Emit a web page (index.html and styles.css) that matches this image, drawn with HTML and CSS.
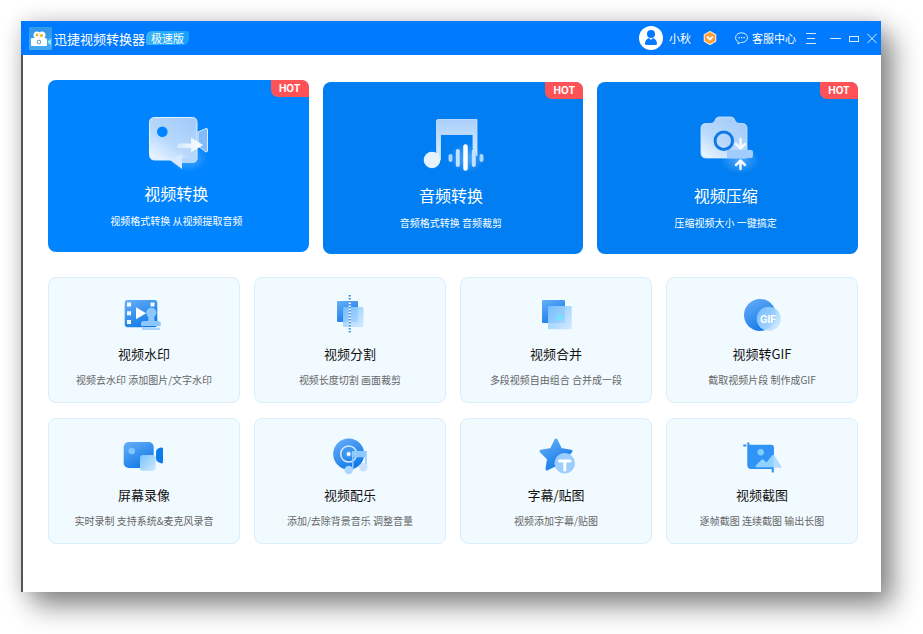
FILE: index.html
```html
<!DOCTYPE html>
<html lang="zh-CN">
<head>
  <meta charset="UTF-8" />
  <title>迅捷视频转换器</title>
  <link rel="stylesheet" href="styles.css">
</head>
<body>
  <svg class="defs" width="0" height="0" aria-hidden="true">
    <defs>
      <linearGradient id="dark" x1="0" y1="0" x2="0.6" y2="1">
        <stop offset="0" stop-color="#69b0f8" />
        <stop offset="1" stop-color="#1279e8" />
      </linearGradient>
      <linearGradient id="light" x1="0" y1="0" x2="1" y2="1">
        <stop offset="0" stop-color="#78c2ff" />
        <stop offset="1" stop-color="#d2e9ff" />
      </linearGradient>
      <linearGradient id="hero" x1="0.9" y1="0.1" x2="0.2" y2="1">
        <stop offset="0" stop-color="#a3ccfa" />
        <stop offset="0.6" stop-color="#b9d9fc" />
        <stop offset="1" stop-color="#e6f2ff" />
      </linearGradient>
      <linearGradient id="note" x1="0" y1="0" x2="0" y2="1">
        <stop offset="0" stop-color="#a9cffb" />
        <stop offset="1" stop-color="#dcedff" />
      </linearGradient>
      <linearGradient id="fade" x1="0" y1="0" x2="1" y2="0">
        <stop offset="0" stop-color="#d4e8ff" />
        <stop offset="1" stop-color="#ffffff" />
      </linearGradient>
      <radialGradient id="glow">
        <stop offset="0" stop-color="#6cb6ff" stop-opacity="0.7" />
        <stop offset="1" stop-color="#6cb6ff" stop-opacity="0" />
      </radialGradient>
    </defs>
  </svg>

  <div class="window">
    <header class="titlebar">
      <svg class="logo" width="23" height="23" viewBox="0 0 23 23">
        <rect width="23" height="23" rx="1" fill="#43a8f0" />
        <rect width="23" height="11" rx="1" fill="#3399ea" />
        <circle cx="8" cy="8" r="3.5" fill="#fff" />
        <circle cx="13" cy="8" r="3.5" fill="#fff" />
        <circle cx="8" cy="8" r="1.4" fill="#f5b51e" />
        <circle cx="12.5" cy="8.5" r="1.6" fill="#f5b51e" />
        <path d="M2 12q0-1 1-1h13q2 0 2 2v5q0 1-1 1H3q-1 0-1-1z" fill="#fff" />
        <path d="M19 14l3-2v6l-3-2z" fill="#8eeaf5" />
        <circle cx="10" cy="15" r="1.8" fill="none" stroke="#5f9bc9" />
      </svg>
      <h1>迅捷视频转换器</h1>
      <span class="edition">极速版</span>

      <div class="account">
        <a href="#" class="user">
          <svg width="24" height="24" viewBox="0 0 24 24">
            <circle cx="12" cy="12" r="12" fill="#fff" />
            <circle cx="12" cy="8" r="4" fill="#007aff" />
            <path d="M6 18.500c0-4 1.500-5.500 4-6.500l2 2 2-2c2.500 1 4 2.500 4 6.500-1 .8-11 .8-12 0z" fill="#007aff" />
          </svg>
          <span>小秋</span>
        </a>
        <button class="vip" aria-label="VIP">
          <svg width="14" height="14" viewBox="0 0 14 14">
            <path d="M7 .5l5.700 3.200v6.600L7 13.500l-5.700-3.200V3.700z" fill="#ff9d38" stroke="#ffe5ca" stroke-width="1.2" stroke-linejoin="round" />
            <path d="M4.500 6L7 8.500 9.500 6" fill="none" stroke="#fff" stroke-width="1.8" stroke-linecap="round" stroke-linejoin="round" />
          </svg>
        </button>
        <a href="#" class="service">
          <svg width="13" height="13" viewBox="0 0 13 13">
            <path d="M6.500.8C3 .8.6 2.900.6 5.700c0 1.800 1 3.200 2.500 4L3 12l2.500-1.500h1c3.400 0 5.900-2 5.900-4.800S9.900.8 6.500.8z" fill="none" stroke="#e0efff" />
            <path d="M3.500 5.700h1.200M6 5.700h1.200M8.500 5.700h1.200" stroke="#fff" stroke-width="1.2" />
          </svg>
          <span>客服中心</span>
        </a>
      </div>

      <div class="controls">
        <button class="menu" aria-label="菜单">
          <svg width="10" height="11" viewBox="0 0 10 11"><path d="M0 .5h10M1 5.500h8M0 10.500h10" stroke="#d5e9ff" /></svg>
        </button>
        <button aria-label="最小化">
          <svg width="11" height="11" viewBox="0 0 11 11"><path d="M0 5.500h11" stroke="#d5e9ff" /></svg>
        </button>
        <button aria-label="最大化">
          <svg width="10" height="11" viewBox="0 0 10 11"><rect x="0.5" y="3.5" width="9" height="5" fill="none" stroke="#d5e9ff" /></svg>
        </button>
        <button aria-label="关闭">
          <svg width="10" height="11" viewBox="0 0 10 11"><path d="M.5 1l9 9M9.500 1l-9 9" stroke="#e5f2ff" /></svg>
        </button>
      </div>
    </header>

    <main>
      <section class="hero-grid">
        <button class="hero active">
          <span class="hot">HOT</span>
          <svg width="64" height="60" viewBox="0 0 64 60">
            <ellipse cx="42" cy="46" rx="20" ry="14" fill="url(#glow)" />
            <path d="M52 20l8-3.500q1.500-.5 1.500 1.500v20q0 2.500-1.500 2L52 34z" fill="#83bbfa" stroke="#d9ebff" />
            <path d="M9 5.500h37q5 0 5 5V48H9q-5.500 0-5.500-5.500v-32q0-5 5.500-5z" fill="url(#hero)" stroke="#e4f1ff" />
            <circle cx="16.3" cy="19.7" r="5.3" fill="#0084ff" />
            <path d="M31 36q0-4.500 4-4.500h10v-6L57 33l-12 7.500V36z" fill="url(#fade)" />
            <path d="M51 41v6q0 4-4 4H35v-5h12q4 0 4-5z" fill="#b5d7fd" />
            <path d="M36 42v15L24 48z" fill="#d8eaff" />
          </svg>
          <strong>视频转换</strong>
          <small>视频格式转换 从视频提取音频</small>
        </button>

        <button class="hero">
          <span class="hot">HOT</span>
          <svg width="64" height="60" viewBox="0 0 64 60">
            <ellipse cx="46" cy="44" rx="18" ry="15" fill="url(#glow)" />
            <path d="M15.500 46V7q0-1.500 1.500-1.500h39V42q-3-7-4-8V20.500H19.500V46z" fill="url(#note)" stroke="#cfe5ff" stroke-width="0.8" />
            <circle cx="11" cy="46" r="8.3" fill="#e6f3ff" />
            <path d="M36.800 37v14M52.800 37v14" stroke="#c3e2ff" stroke-width="4" stroke-linecap="round" />
            <path d="M44.500 32.500v22" stroke="#fff" stroke-width="4.5" stroke-linecap="round" />
            <path d="M29.500 42v4M60.500 42v4" stroke="#a8d4ff" stroke-width="4" stroke-linecap="round" />
          </svg>
          <strong>音频转换</strong>
          <small>音频格式转换 音频裁剪</small>
        </button>

        <button class="hero">
          <span class="hot">HOT</span>
          <svg width="64" height="60" viewBox="0 0 64 60">
            <ellipse cx="44" cy="46" rx="20" ry="14" fill="url(#glow)" />
            <path d="M10 9.500h5q3 0 4-3 1-3.500 4-3.500h12q3 0 4 3.500 1 3 4 3h3q5 0 5 5V44H10q-5 0-5-5V14.500q0-5 5-5z" fill="url(#hero)" stroke="#d6e9ff" stroke-width="0.8" />
            <circle cx="27.8" cy="26.7" r="8.7" fill="none" stroke="#1079e3" stroke-width="3" />
            <path d="M31 36h24q2 0 2 2v4q0 2-2 2H31z" fill="#a0cdfd" />
            <path d="M44.500 25v9M40 30l4.500 4.500L49 30M44.500 55v-8M40 51l4.500-4.500L49 51" fill="none" stroke="#f4faff" stroke-width="2.5" stroke-linecap="round" stroke-linejoin="round" />
          </svg>
          <strong>视频压缩</strong>
          <small>压缩视频大小 一键搞定</small>
        </button>
      </section>

      <section class="tool-grid">
        <button class="tool">
          <svg width="44" height="44" viewBox="0 0 44 44">
            <rect x="2.7" y="7" width="32.6" height="27.3" rx="3" fill="url(#dark)" />
            <path d="M5 9.500h4v4H5zM5 18.300h4v4H5zM5 27h4v4H5zM28.500 9.500h4v4h-4z" fill="#f1faff" />
            <path d="M14 14.300l10 6-10 6z" fill="#fff" />
            <path d="M29.300 14.700a5 5 0 0 1 3.500 8.600q-1.500 2 0 4.700h3q3 0 3 3v2H19v-2q0-3 3-3h4q1.500-2.700-.2-4.700a5 5 0 0 1 3.500-8.600z" fill="#8cc8ff" />
            <rect x="20" y="34.7" width="18" height="2.3" fill="#a9d5ff" />
          </svg>
          <strong>视频水印</strong>
          <small>视频去水印 添加图片/文字水印</small>
        </button>

        <button class="tool">
          <svg width="44" height="44" viewBox="0 0 44 44">
            <rect x="9" y="8" width="21" height="21" rx="1" fill="url(#dark)" />
            <rect x="15" y="14" width="20.5" height="20" rx="1" fill="url(#light)" fill-opacity="0.9" />
            <path d="M21.700 8v26" stroke="#fff" stroke-width="2" />
            <path d="M21.700 2v39" stroke="#2f86e0" stroke-width="2" stroke-dasharray="1.5 1.5" />
          </svg>
          <strong>视频分割</strong>
          <small>视频长度切割 画面裁剪</small>
        </button>

        <button class="tool">
          <svg width="44" height="44" viewBox="0 0 44 44">
            <rect x="8" y="7" width="23" height="23" rx="1" fill="url(#dark)" />
            <rect x="14" y="13" width="23.7" height="23.3" rx="1" fill="url(#light)" fill-opacity="0.9" />
            <path d="M23.700 20.300l7.300 4-7.300 4z" fill="#6ee4ff" />
          </svg>
          <strong>视频合并</strong>
          <small>多段视频自由组合 合并成一段</small>
        </button>

        <button class="tool">
          <svg width="44" height="44" viewBox="0 0 44 44">
            <circle cx="20" cy="22" r="16" fill="url(#dark)" />
            <circle cx="28.7" cy="25.7" r="12" fill="url(#light)" fill-opacity="0.9" />
            <text class="gif" x="20" y="30">GIF</text>
          </svg>
          <strong>视频转GIF</strong>
          <small>截取视频片段 制作成GIF</small>
        </button>

        <button class="tool">
          <svg width="44" height="44" viewBox="0 0 44 44">
            <rect x="1.7" y="8" width="30" height="26" rx="5" fill="url(#dark)" />
            <circle cx="9.7" cy="17" r="3.3" fill="#7cc5ff" />
            <path d="M34 18q0-2.500 2.500-3.700L39 13.500q2-.5 2 1.500v13q0 2-2 1.300l-2.500-1Q34 27 34 24.500z" fill="#0d7bea" />
            <rect x="18" y="21" width="15.7" height="15.7" rx="3" fill="url(#light)" />
          </svg>
          <strong>屏幕录像</strong>
          <small>实时录制 支持系统&amp;麦克风录音</small>
        </button>

        <button class="tool">
          <svg width="44" height="44" viewBox="0 0 44 44">
            <circle cx="20.7" cy="20" r="15.5" fill="url(#dark)" />
            <circle cx="20.7" cy="20" r="8" fill="none" stroke="#d6ebff" stroke-width="1.5" />
            <circle cx="20.7" cy="20" r="3.5" fill="#4b9ff3" />
            <path d="M24 17h14.700v17h-1.500V23.300H25.500V36H24z" fill="#8dcbff" />
            <circle cx="20.7" cy="20" r="2" fill="#fff" />
            <circle cx="20.7" cy="36" r="4.2" fill="#a9d5ff" />
            <circle cx="35.3" cy="33.3" r="4.2" fill="#c7e1ff" />
          </svg>
          <strong>视频配乐</strong>
          <small>添加/去除背景音乐 调整音量</small>
        </button>

        <button class="tool">
          <svg width="44" height="44" viewBox="0 0 44 44">
            <path d="M22 6l4.700 9.600L37 17.300l-7.300 7.600L31.500 35 22 30.400 13 35l1.500-10.300L7 17.300l10.300-1.700z" fill="url(#dark)" stroke="url(#dark)" stroke-width="3" stroke-linejoin="round" />
            <circle cx="30.7" cy="29.3" r="10.3" fill="#9bceff" />
            <path d="M25.500 27h10.500M30.800 27v9" stroke="#fff" stroke-width="3" stroke-linecap="round" />
          </svg>
          <strong>字幕/贴图</strong>
          <small>视频添加字幕/贴图</small>
        </button>

        <button class="tool">
          <svg width="44" height="44" viewBox="0 0 44 44">
            <path d="M8.300 8.500V31q0 3 3 3h21.500v4.500" fill="none" stroke="#2b8df0" stroke-width="2" />
            <path d="M3.300 11.500h3" stroke="#2b8df0" stroke-width="2" />
            <path d="M8.300 10.700H31q3 0 3 3v20.600H11.300q-3 0-3-3z" fill="#2f94f6" />
            <circle cx="20.7" cy="18.3" r="3.2" fill="#84ccff" />
            <path d="M15.500 33.300q0-1.500 1-2.500l5-5q1-1 2 0l3 2.700 5.500-7q1-1.500 2.200 0l7.500 11.800z" fill="#8fd2ff" />
            <path d="M33.500 20.500l8 13h-8z" fill="#b4dcff" />
          </svg>
          <strong>视频截图</strong>
          <small>逐帧截图 连续截图 输出长图</small>
        </button>
      </section>
    </main>
  </div>
</body>
</html>
```

FILE: styles.css
```css
* {
  box-sizing: border-box;
}

body {
  margin: 0;
  min-height: 100vh;
  padding: 21px 42px 42px 21px;
  display: flex;
  background: #fff;
  font-family: "Noto Sans CJK SC", sans-serif;
}

button {
  margin: 0;
  padding: 0;
  border: none;
  background: none;
  color: inherit;
  font-family: inherit;
  cursor: pointer;
}

a {
  color: inherit;
  text-decoration: none;
}

svg {
  display: block;
  flex: none;
}

.defs {
  position: absolute;
}

.window {
  flex: 1;
  display: flex;
  flex-direction: column;
  background: #fff;
  box-shadow: 12px 14px 26px rgba(0, 0, 0, 0.45), 0 0 20px rgba(0, 0, 0, 0.15);
}

/* Title bar */
.titlebar {
  display: flex;
  align-items: center;
  height: 34px;
  padding: 0 4px 0 8px;
  background: #007aff;
  color: #fff;
  font-size: 11px;
  white-space: nowrap;
}

h1 {
  margin: 0 1px 0 2px;
  font-size: 13px;
  font-weight: 400;
}

.edition {
  padding: 0 5px;
  line-height: 14px;
  border-radius: 6px 2px 6px 2px;
  background: linear-gradient(90deg, #37b5f5, #16a0ff);
}

.account,
.controls,
.user,
.service {
  display: flex;
  align-items: center;
}

.account {
  margin-left: auto;
}

.user {
  gap: 6px;
}

.vip {
  margin: 0 18px 0 12px;
}

.service {
  gap: 4px;
}

.controls {
  gap: 8px;
  margin-left: 10px;
}

.menu {
  margin-right: 6px;
}

/* Main area */
main {
  flex: 1;
  padding: 27px 23px 40px 25px;
  border-left: 2px solid #555;
}

.hero-grid {
  display: grid;
  grid-template-columns: repeat(3, 1fr);
  gap: 14px;
  margin-bottom: 23px;
}

.hero,
.tool {
  display: flex;
  flex-direction: column;
  align-items: center;
  white-space: nowrap;
}

.hero strong,
.tool strong {
  font-weight: 400;
}

.hero small,
.tool small {
  font-size: 10px;
  line-height: 16px;
}

.hero {
  position: relative;
  height: 172px;
  padding-top: 32px;
  border-radius: 8px;
  background: #007ef2;
  color: #fff;
}

.hero.active {
  background: #0084ff;
  transform: translateY(-2px);
}

.hero strong {
  margin: 9px 0 8px;
  padding-right: 4px;
  font-size: 16px;
  line-height: 24px;
}

.hero small {
  padding-right: 4px;
}

.hot {
  position: absolute;
  top: 0;
  right: 0;
  width: 38px;
  border-radius: 0 7px 0 7px;
  background: #ff5257;
  font-family: Inter, sans-serif;
  font-size: 10px;
  font-weight: 700;
  line-height: 17px;
}

.tool-grid {
  display: grid;
  grid-template-columns: repeat(4, 1fr);
  gap: 15px 14px;
}

.tool {
  height: 126px;
  padding-top: 15px;
  border: 1px solid #d9effc;
  border-radius: 8px;
  background: #f1faff;
}

.tool strong {
  margin: 7px 0 8px;
  color: #111;
  font-size: 13px;
  line-height: 20px;
}

.tool small {
  color: #666;
}

.gif {
  fill: #fff;
  font: 700 10px Inter, sans-serif;
}
```
